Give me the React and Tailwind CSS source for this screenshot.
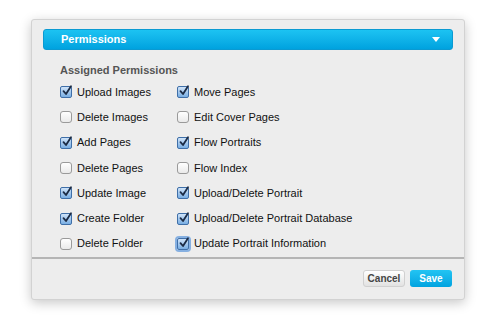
import React from "react";

const left = [
  ["Upload Images", true],
  ["Delete Images", false],
  ["Add Pages", true],
  ["Delete Pages", false],
  ["Update Image", true],
  ["Create Folder", true],
  ["Delete Folder", false],
];
const right = [
  ["Move Pages", true],
  ["Edit Cover Pages", false],
  ["Flow Portraits", true],
  ["Flow Index", false],
  ["Upload/Delete Portrait", true],
  ["Upload/Delete Portrait Database", true],
  ["Update Portrait Information", true, true],
];

function Box({ checked, focus }) {
  if (!checked) {
    return (
      <span className="w-[12px] h-[12px] rounded-[3px] border border-[#9a9a9a] bg-gradient-to-b from-white to-[#eaeaea] shrink-0" />
    );
  }
  return (
    <span
      className={
        "relative w-[12px] h-[12px] rounded-[2px] border border-[#3f6fa8] bg-gradient-to-b from-[#cfe3f8] to-[#79aee3] shrink-0 " +
        (focus ? "shadow-[0_0_0_2px_rgba(90,150,220,0.7)]" : "")
      }
    >
      <svg viewBox="0 0 12 12" className="absolute left-[0px] top-[-2px] w-[12px] h-[12px] overflow-visible">
        <path d="M2.5 6.2 L5 9 L10 1.2" fill="none" stroke="#1b2b45" strokeWidth="1.8" strokeLinecap="round" strokeLinejoin="round" />
      </svg>
    </span>
  );
}

function Row({ label, checked, focus }) {
  return (
    <div className="h-[25.3px] flex items-center gap-[5px]">
      <Box checked={checked} focus={focus} />
      <span className="text-[11px] text-[#111] leading-none">{label}</span>
    </div>
  );
}

export default function App() {
  return (
    <div
      className="w-[485px] h-[331px] bg-white pt-[19px] pl-[31px]"
      style={{ fontFamily: '"Liberation Sans", Arial, sans-serif' }}
    >
      <div className="w-[434px] h-[281px] bg-[#ededed] border border-[#d2d2d2] rounded-[3px] shadow-[0_3px_12px_rgba(0,0,0,0.22)] flex flex-col">
        <div className="mx-[11px] mt-[9px] h-[21px] rounded-[3px] bg-gradient-to-b from-[#1cc3f2] to-[#00a2df] border border-[#0a9ad2] flex items-center justify-between pl-[17px] pr-[12px]">
          <span className="text-white font-bold text-[11px] leading-none">Permissions</span>
          <svg width="8" height="6" viewBox="0 0 8 6">
            <path d="M0 0 H8 L4 5 Z" fill="white" />
          </svg>
        </div>
        <div className="pl-[28px] pt-[13px]">
          <div className="text-[11px] font-bold text-[#555] leading-[14px]">Assigned Permissions</div>
          <div className="flex mt-[2.5px]">
            <div className="w-[117px]">
              {left.map(([l, c]) => (
                <Row key={l} label={l} checked={c} />
              ))}
            </div>
            <div>
              {right.map(([l, c, f]) => (
                <Row key={l} label={l} checked={c} focus={f} />
              ))}
            </div>
          </div>
        </div>
        <div className="border-t-2 border-[#b5b5b5] flex-1 flex items-center justify-end gap-[5px] pr-[12px]">
          <button className="w-[42px] h-[17px] rounded-[3px] bg-gradient-to-b from-white to-[#e2e2e2] border border-[#d0d0d0] text-[10px] font-bold text-[#444] leading-none">
            Cancel
          </button>
          <button className="w-[42px] h-[17px] rounded-[3px] bg-gradient-to-b from-[#22c4f3] to-[#00a3e0] text-[10px] font-bold text-white leading-none">
            Save
          </button>
        </div>
      </div>
    </div>
  );
}
